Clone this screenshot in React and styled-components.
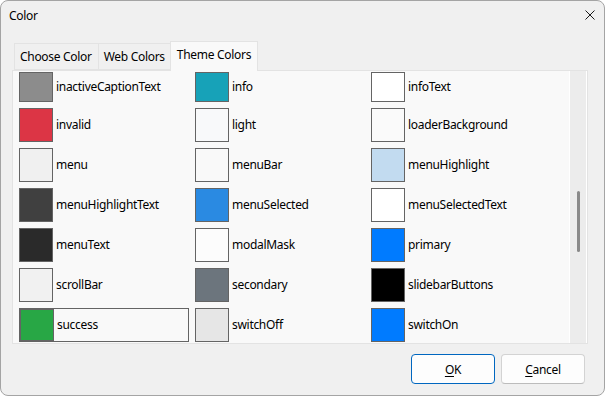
import React from "react";
import styled, { createGlobalStyle } from "styled-components";

const GlobalStyle = createGlobalStyle`
  html, body { margin: 0; padding: 0; background: #ffffff; }
  body { font-family: "Noto Sans", "Open Sans", sans-serif; }
`;

const Window = styled.div`
  box-sizing: border-box;
  width: 605px;
  height: 396px;
  border: 1px solid #a4a4a4;
  border-radius: 8px;
  background: #f0f0f0;
  display: flex;
  flex-direction: column;
  overflow: hidden;
  font-family: "Noto Sans", "Open Sans", sans-serif;
  font-size: 12px;
  letter-spacing: -0.3px;
  color: #000;
`;

const TitleBar = styled.div`
  height: 30px;
  display: flex;
  align-items: center;
  justify-content: space-between;
  padding: 0 9px 2px 8px;
  box-sizing: border-box;
`;

const Title = styled.span`
  font-size: 12px;
`;

const CloseButton = styled.button`
  border: none;
  background: transparent;
  padding: 0;
  width: 10px;
  height: 10px;
  display: flex;
  svg { display: block; }
`;

const TabStrip = styled.div`
  margin-top: 10px;
  padding-left: 13px;
  height: 30px;
  display: flex;
  align-items: flex-end;
  margin-bottom: -1px;
  position: relative;
  z-index: 1;
`;

const Tab = styled.div`
  box-sizing: border-box;
  height: ${(p) => (p.$active ? "30px" : "27px")};
  padding: ${(p) => (p.$active ? "0 6px 4px" : "0 6px 1px 5px")};
  margin: ${(p) => (p.$active ? "0 -2px 0 -2px" : "0 0 1px -1px")};
  display: flex;
  align-items: center;
  border: 1px solid #e3e3e3;
  border-bottom: ${(p) => (p.$active ? "none" : "1px solid #e3e3e3")};
  background: ${(p) => (p.$active ? "#f9f9f9" : "#f0f0f0")};
  white-space: nowrap;
  &:first-child { margin-left: 0; }
`;

const Panel = styled.div`
  box-sizing: border-box;
  margin: 0 16px 0 11px;
  height: 274px;
  border: 1px solid #e3e3e3;
  background: #f9f9f9;
  display: flex;
`;

const List = styled.div`
  flex: 1;
  overflow: hidden;
  padding: 1px 0 0 6px;
  display: grid;
  grid-template-columns: repeat(3, 176px);
  grid-template-rows: 30px repeat(6, 34px);
  row-gap: 6px;
  align-content: start;
`;

const Cell = styled.div`
  box-sizing: border-box;
  width: 170px;
  display: flex;
  align-items: stretch;
  gap: 3px;
  border: 1px solid ${(p) => (p.$selected ? "#646464" : "transparent")};
  margin-left: ${(p) => (p.$selected ? "0" : "-1px")};
  margin-top: ${(p) => (p.$selected ? "0" : "-1px")};
  height: ${(p) => (p.$selected ? "100%" : "calc(100% + 2px)")};
`;

const Swatch = styled.div`
  box-sizing: border-box;
  width: 34px;
  flex: none;
  border: 1px solid #646464;
  background: ${(p) => p.$color};
`;

const Label = styled.span`
  align-self: center;
  white-space: nowrap;
  margin-top: -1px;
`;

const ScrollTrack = styled.div`
  box-sizing: border-box;
  width: 18px;
  background: #ececec;
  border-left: 1px solid #ffffff;
  border-right: 1px solid #ffffff;
  display: flex;
  flex-direction: column;
  align-items: center;
`;

const Thumb = styled.div`
  margin-top: 120px;
  width: 3px;
  height: 61px;
  border-radius: 2px;
  background: #8a8a8a;
`;

const ButtonRow = styled.div`
  margin-top: 10px;
  padding-right: 19px;
  display: flex;
  justify-content: flex-end;
  gap: 6px;
`;

const Button = styled.button`
  box-sizing: border-box;
  width: 84px;
  height: 30px;
  border-radius: 4px;
  background: #fdfdfd;
  border: 1px solid ${(p) => (p.$primary ? "#0067c0" : "#d3d3d3")};
  border-bottom-color: ${(p) => (p.$primary ? "#0067c0" : "#bcbcbc")};
  font-family: "Noto Sans", "Open Sans", sans-serif;
  font-size: 12px;
  letter-spacing: -0.3px;
  color: #000;
  padding: 0;
  u { text-decoration-thickness: 1px; text-underline-offset: 2px; }
`;

const colors = [
  ["inactiveCaptionText", "#8c8c8c"],
  ["info", "#17a2b8"],
  ["infoText", "#ffffff"],
  ["invalid", "#dc3545"],
  ["light", "#f8f9fa"],
  ["loaderBackground", "#fafafa"],
  ["menu", "#f0f0f0"],
  ["menuBar", "#f9f9f9"],
  ["menuHighlight", "#c2dbf0"],
  ["menuHighlightText", "#404040"],
  ["menuSelected", "#2a8ae2"],
  ["menuSelectedText", "#ffffff"],
  ["menuText", "#2a2a2a"],
  ["modalMask", "#fcfcfc"],
  ["primary", "#007bff"],
  ["scrollBar", "#f1f1f1"],
  ["secondary", "#6c757d"],
  ["slidebarButtons", "#000000"],
  ["success", "#28a745"],
  ["switchOff", "#e6e6e6"],
  ["switchOn", "#007bff"],
];

export default function App() {
  return (
    <>
      <GlobalStyle />
      <Window>
        <TitleBar>
          <Title>Color</Title>
          <CloseButton aria-label="Close">
            <svg width="10" height="10" viewBox="0 0 10 10">
              <path d="M0.5 0.5 L9.5 9.5 M9.5 0.5 L0.5 9.5" stroke="#1a1a1a" strokeWidth="1" fill="none" />
            </svg>
          </CloseButton>
        </TitleBar>
        <TabStrip>
          <Tab>Choose Color</Tab>
          <Tab>Web Colors</Tab>
          <Tab $active>Theme Colors</Tab>
        </TabStrip>
        <Panel>
          <List>
            {colors.map(([name, c]) => (
              <Cell key={name} $selected={name === "success"}>
                <Swatch $color={c} />
                <Label>{name}</Label>
              </Cell>
            ))}
          </List>
          <ScrollTrack>
            <Thumb />
          </ScrollTrack>
        </Panel>
        <ButtonRow>
          <Button $primary>
            <u>O</u>K
          </Button>
          <Button>
            <u>C</u>ancel
          </Button>
        </ButtonRow>
      </Window>
    </>
  );
}
